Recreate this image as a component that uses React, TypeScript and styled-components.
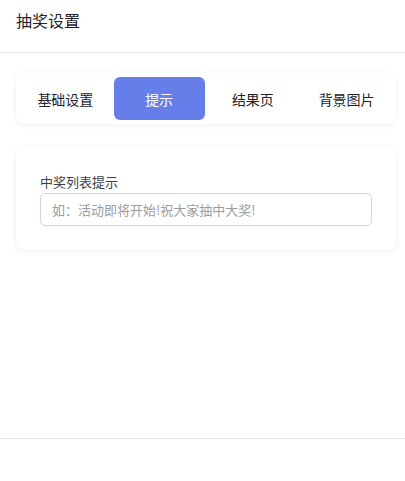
import React, { useState } from "react";
import styled, { createGlobalStyle } from "styled-components";

const GlobalStyle = createGlobalStyle`
  html, body {
    margin: 0;
    padding: 0;
    background: #ffffff;
  }
  body {
    font-family: "Noto Sans CJK SC", "Noto Sans", "Liberation Sans", sans-serif;
  }
  * {
    box-sizing: border-box;
  }
`;

const tabs = ["基础设置", "提示", "结果页", "背景图片"];

const App: React.FC = () => {
  const [active, setActive] = useState(1);

  return (
    <Page>
      <GlobalStyle />
      <Header>
        <Title>抽奖设置</Title>
      </Header>
      <Body>
        <TabBar>
          {tabs.map((t, i) => (
            <Tab key={t} $active={i === active} onClick={() => setActive(i)}>
              {t}
            </Tab>
          ))}
        </TabBar>
        <Card>
          <Label>中奖列表提示</Label>
          <Input placeholder="如：活动即将开始!祝大家抽中大奖!" />
        </Card>
      </Body>
      <Footer />
    </Page>
  );
};

const Page = styled.div`
  display: flex;
  flex-direction: column;
  height: 481px;
  background: #fff;
`;

const Header = styled.div`
  height: 53px;
  padding: 0 16px 13px;
  display: flex;
  align-items: center;
  border-bottom: 1px solid #e6e7eb;
`;

const Title = styled.h1`
  margin: 0;
  font-size: 16px;
  font-weight: 400;
  color: #1f2329;
  line-height: 24px;
`;

const Body = styled.div`
  flex: 1;
  padding: 20px 9px 0 16px;
  display: flex;
  flex-direction: column;
  gap: 23px;
`;

const TabBar = styled.div`
  display: flex;
  gap: 3px;
  padding: 4px;
  height: 51px;
  background: #fff;
  border-radius: 8px;
  box-shadow: 0 1px 6px rgba(0, 0, 0, 0.07);
`;

const Tab = styled.button<{ $active: boolean }>`
  flex: 1;
  border: none;
  border-radius: 6px;
  font-family: inherit;
  font-size: 14px;
  cursor: pointer;
  background: ${(p) => (p.$active ? "#667eea" : "transparent")};
  color: ${(p) => (p.$active ? "#ffffff" : "#1f2329")};
`;

const Card = styled.div`
  padding: 24px;
  border-radius: 8px;
  background: #fff;
  box-shadow: 0 1px 6px rgba(0, 0, 0, 0.07);
  display: flex;
  flex-direction: column;
`;

const Label = styled.label`
  font-size: 13px;
  line-height: 22px;
  color: #3a3f4b;
`;

const Input = styled.input`
  height: 33px;
  padding: 0 11px;
  border: 1px solid #d3d6dd;
  border-radius: 5px;
  font-family: inherit;
  font-size: 13px;
  color: #333;
  outline: none;

  &::placeholder {
    color: #9a9ca3;
  }
`;

const Footer = styled.div`
  height: 43px;
  border-top: 1px solid #e6e7eb;
`;

export default App;
